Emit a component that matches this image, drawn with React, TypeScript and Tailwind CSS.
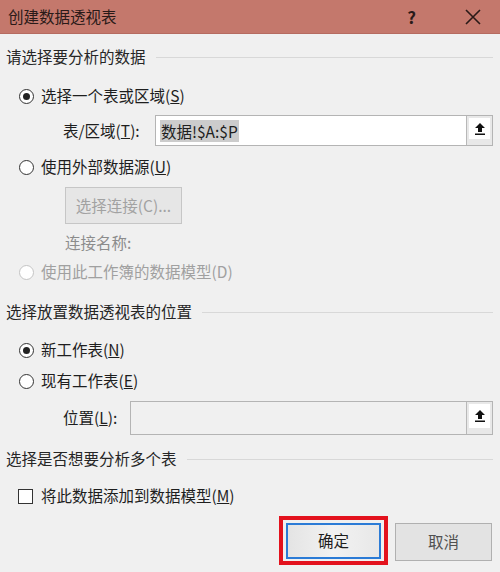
import React from "react";

const font = { fontFamily: '"Noto Sans CJK SC", "Noto Sans", sans-serif' };

function Radio({ checked, disabled }: { checked?: boolean; disabled?: boolean }) {
  return (
    <div
      className={`w-[15px] h-[15px] rounded-full border flex items-center justify-center bg-white ${
        disabled ? "border-[#c4c4c4]" : "border-[#333333]"
      }`}
    >
      {checked && <div className="w-[7px] h-[7px] rounded-full bg-[#222222]" />}
    </div>
  );
}

function GroupHeader({ text, mt }: { text: string; mt: string }) {
  return (
    <div className={`flex items-center h-[20px] pl-[6px] pr-[7px] ${mt}`}>
      <span className="text-[15.5px] text-[#262626] whitespace-nowrap">{text}</span>
      <div className="flex-1 h-px bg-[#d8d8d8] ml-[10px]" />
    </div>
  );
}

function UploadBtn() {
  return (
    <div className="w-[26px] h-full border-l border-[#b8b8b8] bg-[#e8e8e8] flex flex-col">
      <div className="flex-1 bg-white flex items-center justify-center m-[2px] mb-0">
        <svg width="12" height="14" viewBox="0 0 12 14">
          <path d="M6 1 L11 6 L8 6 L8 10 L4 10 L4 6 L1 6 Z" fill="#111" />
          <rect x="1" y="11.5" width="10" height="1.5" fill="#111" />
        </svg>
      </div>
      <div className="h-[6px]" />
    </div>
  );
}

export default function App() {
  return (
    <div className="w-[500px] h-[572px] bg-[#f0f0f0] flex flex-col overflow-hidden text-[#1e1e1e]" style={font}>
      {/* Title bar */}
      <div className="h-[34px] bg-[#c4786c] flex items-center border-b border-[#b56b60] shrink-0">
        <span className="ml-[8px] text-[15.5px] text-[#2a1a18]">创建数据透视表</span>
        <div className="flex-1" />
        <span className="text-[17px] font-bold text-[#2a1a18] mr-[49px]">?</span>
        <svg width="16" height="16" viewBox="0 0 16 16" className="mr-[19px]">
          <path d="M1 1 L15 15 M15 1 L1 15" stroke="#2a1a18" strokeWidth="1.6" />
        </svg>
      </div>

      <GroupHeader text="请选择要分析的数据" mt="mt-[13px]" />

      <div className="flex items-center h-[20px] mt-[19px] pl-[19px] gap-[7px]">
        <Radio checked />
        <span className="text-[15.5px]">
          选择一个表或区域(<span className="underline">S</span>)
        </span>
      </div>

      <div className="flex items-center h-[31px] mt-[9px] pl-[63px]">
        <span className="text-[15.5px] w-[92px]">
          表/区域(<span className="underline">T</span>):
        </span>
        <div className="ml-0 w-[338px] h-full border border-[#b4b4b4] bg-white flex items-stretch">
          <div className="flex-1 flex items-center pl-[4px]">
            <span className="bg-[#cccccc] text-[15.5px] leading-[22px] px-[1px]">数据!$A:$P</span>
          </div>
          <UploadBtn />
        </div>
      </div>

      <div className="flex items-center h-[20px] mt-[11px] pl-[19px] gap-[7px]">
        <Radio />
        <span className="text-[15.5px]">
          使用外部数据源(<span className="underline">U</span>)
        </span>
      </div>

      <div className="flex mt-[10px] pl-[65px]">
        <div className="w-[117px] h-[37px] border border-[#c6c6c6] bg-[#e6e6e6] flex items-center justify-center text-[15.5px] text-[#a2a2a2]">
          选择连接(C)...
        </div>
      </div>

      <div className="flex items-center h-[20px] mt-[9px] pl-[65px]">
        <span className="text-[15.5px] text-[#8c8c8c]">连接名称:</span>
      </div>

      <div className="flex items-center h-[20px] mt-[9px] pl-[19px] gap-[7px]">
        <Radio disabled />
        <span className="text-[15.5px] text-[#a0a0a0]">使用此工作簿的数据模型(D)</span>
      </div>

      <GroupHeader text="选择放置数据透视表的位置" mt="mt-[20px]" />

      <div className="flex items-center h-[20px] mt-[18px] pl-[19px] gap-[7px]">
        <Radio checked />
        <span className="text-[15.5px]">
          新工作表(<span className="underline">N</span>)
        </span>
      </div>

      <div className="flex items-center h-[20px] mt-[11px] pl-[19px] gap-[7px]">
        <Radio />
        <span className="text-[15.5px]">
          现有工作表(<span className="underline">E</span>)
        </span>
      </div>

      <div className="flex items-center h-[34px] mt-[10px] pl-[63px]">
        <span className="text-[15.5px] w-[67px]">
          位置(<span className="underline">L</span>):
        </span>
        <div className="w-[363px] h-full border border-[#b4b4b4] bg-[#f0f0f0] flex items-stretch">
          <div className="flex-1" />
          <UploadBtn />
        </div>
      </div>

      <GroupHeader text="选择是否想要分析多个表" mt="mt-[14px]" />

      <div className="flex items-center h-[20px] mt-[17px] pl-[18px] gap-[8px]">
        <div className="w-[15px] h-[15px] border border-[#333333] bg-white" />
        <span className="text-[15.5px]">
          将此数据添加到数据模型(<span className="underline">M</span>)
        </span>
      </div>

      <div className="flex items-start mt-[10px] pl-[279px]">
        <div className="w-[109px] h-[49px] border-[4px] border-[#e3121d] flex items-center justify-center bg-[#f0f0f0]">
          <div className="w-[95px] h-[36px] border-2 border-[#2b7bd6] bg-gradient-to-r from-[#e4e4e4] via-[#f2f2f2] to-[#e8e8e8] flex items-center justify-center text-[15.5px]">
            确定
          </div>
        </div>
        <div className="ml-[7px] mt-[7px] w-[97px] h-[38px] border border-[#b0b0b0] bg-[#e3e3e3] flex items-center justify-center text-[15.5px] text-[#505050]">
          取消
        </div>
      </div>
    </div>
  );
}
